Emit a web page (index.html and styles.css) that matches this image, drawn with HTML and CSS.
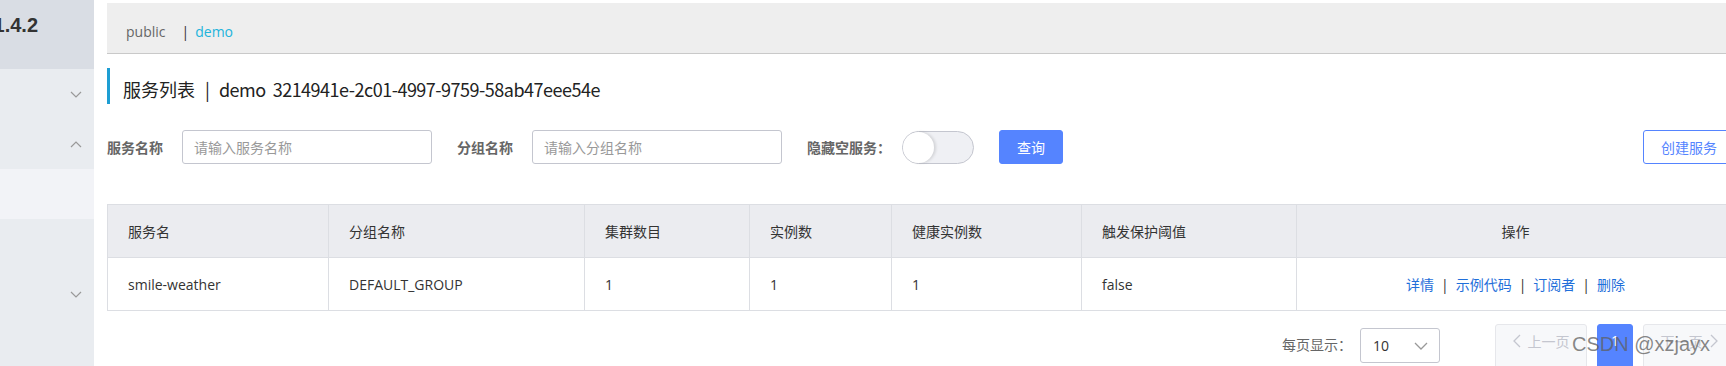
FILE: index.html
```html
<!DOCTYPE html>
<html lang="zh-CN">
<head>
<meta charset="utf-8">
<title>服务列表</title>
<link rel="stylesheet" href="styles.css">
</head>
<body>
<div class="app">
  <aside class="sidebar">
    <div class="brand">1.4.2</div>
    <nav class="menu">
      <div class="menu-item"><svg class="chev" viewBox="0 0 12 7" width="12" height="7"><polyline points="1,1 6,6 11,1"/></svg></div>
      <div class="menu-item"><svg class="chev" viewBox="0 0 12 7" width="12" height="7"><polyline points="1,6 6,1 11,6"/></svg></div>
      <div class="menu-item active"></div>
      <div class="menu-item"></div>
      <div class="menu-item"><svg class="chev" viewBox="0 0 12 7" width="12" height="7"><polyline points="1,1 6,6 11,1"/></svg></div>
    </nav>
  </aside>
  <main class="main">
    <div class="crumb"><span class="ns">public</span><span class="sep">|</span><span class="ns current">demo</span></div>
    <h1 class="page-title">服务列表<span class="t-sep">|</span><span class="t-id">demo&nbsp;&nbsp;3214941e-2c01-4997-9759-58ab47eee54e</span></h1>
    <div class="filters">
      <label class="field"><span class="field-label">服务名称</span><input class="input" placeholder="请输入服务名称"></label>
      <label class="field"><span class="field-label">分组名称</span><input class="input" placeholder="请输入分组名称"></label>
      <div class="field"><span class="field-label switch-label">隐藏空服务：</span><span class="switch"></span></div>
      <button class="btn btn-primary">查询</button>
      <button class="btn btn-outline">创建服务</button>
    </div>
    <table class="grid">
      <colgroup>
        <col class="c1"><col class="c2"><col class="c3"><col class="c4"><col class="c5"><col class="c6"><col>
      </colgroup>
      <thead>
        <tr><th>服务名</th><th>分组名称</th><th>集群数目</th><th>实例数</th><th>健康实例数</th><th>触发保护阈值</th><th class="center">操作</th></tr>
      </thead>
      <tbody>
        <tr>
          <td>smile-weather</td><td>DEFAULT_GROUP</td><td>1</td><td>1</td><td>1</td><td>false</td>
          <td class="center"><a class="link">详情</a><span class="bar">|</span><a class="link">示例代码</a><span class="bar">|</span><a class="link">订阅者</a><span class="bar">|</span><a class="link">删除</a></td>
        </tr>
      </tbody>
    </table>
    <div class="pager">
      <span class="pager-label">每页显示：</span>
      <div class="select"><span>10</span><svg class="sel-chev" viewBox="0 0 14 8" width="14" height="8"><polyline points="1,1 7,7 13,1"/></svg></div>
      <button class="pg pg-prev"><svg viewBox="0 0 8 14" width="8" height="14"><polyline points="7,1 1,7 7,13"/></svg>上一页</button>
      <button class="pg pg-cur">1</button>
      <button class="pg pg-next">下一页<svg viewBox="0 0 8 14" width="8" height="14"><polyline points="1,1 7,7 1,13"/></svg></button>
    </div>
  </main>
  <div class="watermark">CSDN @xzjayx</div>
</div>
</body>
</html>
```
FILE: styles.css
```css
html, body {
  margin: 0;
  padding: 0;
  overflow: hidden;
  background: #fff;
}
body {
  font-family: "Open Sans", "Noto Sans CJK SC", sans-serif;
  color: #333;
  font-size: 14px;
}
.app {
  display: flex;
  width: 1746px;
  height: 366px;
  position: relative;
}
.sidebar {
  flex: none;
  width: 94px;
  background: #e9ecf0;
}
.brand {
  height: 69px;
  box-sizing: border-box;
  background: #d9dde4;
  display: flex;
  justify-content: flex-end;
  padding: 13px 56px 0 0;
  font-family: "Liberation Sans", sans-serif;
  font-size: 20px;
  line-height: 24px;
  font-weight: bold;
  color: #333;
}
.menu-item {
  height: 50px;
  display: flex;
  align-items: center;
  justify-content: flex-end;
  padding-right: 12px;
}
.menu-item.active {
  background: #f2f3f7;
}
.chev {
  fill: none;
  stroke: #999;
  stroke-width: 1.2;
}
.main {
  flex: none;
  width: 1628px;
  margin-left: 13px;
  padding-top: 3px;
}
.crumb {
  height: 51px;
  box-sizing: border-box;
  background: #eeeeee;
  border-bottom: 1px solid #c9c9c9;
  display: flex;
  align-items: center;
  padding: 7px 0 0 19px;
  font-size: 14px;
}
.ns { color: #666; }
.ns.current { color: #22b4dc; }
.sep { color: #333; margin: 0 6px 0 16px; }
.page-title {
  margin: 14px 0 0;
  height: 36px;
  box-sizing: border-box;
  border-left: 3px solid #1e9ed3;
  padding: 9px 0 0 13px;
  font-size: 18px;
  line-height: 24px;
  font-weight: normal;
  color: #222;
  font-family: "Noto Sans CJK SC", "Liberation Sans", sans-serif;
  white-space: nowrap;
}
.t-sep { margin: 0 9px 0 10px; }
.t-id { letter-spacing: -0.5px; }
.filters {
  margin-top: 26px;
  height: 34px;
  display: flex;
  align-items: center;
}
.field {
  display: flex;
  align-items: center;
}
.field + .field { margin-left: 25px; }
.field-label {
  font-weight: bold;
  color: #666;
  margin-right: 19px;
  white-space: nowrap;
}
.switch-label { margin-right: 11px; }
.input {
  width: 250px;
  height: 34px;
  box-sizing: border-box;
  border: 1px solid #c4c6cf;
  border-radius: 3px;
  padding: 0 11px;
  font: inherit;
  color: #333;
  outline: none;
}
.input::placeholder { color: #999; }
.switch {
  position: relative;
  width: 72px;
  height: 33px;
  box-sizing: border-box;
  border: 1px solid #c4c6cf;
  border-radius: 17px;
  background: #eff0f4;
}
.switch::after {
  content: "";
  position: absolute;
  left: 0;
  top: 0;
  width: 31px;
  height: 31px;
  border-radius: 50%;
  background: #fff;
  box-shadow: 2px 0 3px rgba(0, 0, 0, 0.12);
}
.btn {
  height: 34px;
  box-sizing: border-box;
  border-radius: 3px;
  font: inherit;
  padding: 0 17px;
  cursor: pointer;
}
.btn-primary {
  margin-left: 25px;
  background: #5584ff;
  border: 1px solid #5584ff;
  color: #fff;
}
.btn-outline {
  margin-left: auto;
  background: #fff;
  border: 1px solid #5584ff;
  color: #5584ff;
  padding: 0 17px;
}
.grid {
  margin-top: 40px;
  width: 100%;
  border-collapse: collapse;
  table-layout: fixed;
  border: 1px solid #dcdee3;
}
.c1 { width: 221px; }
.c2 { width: 256px; }
.c3 { width: 165px; }
.c4 { width: 142px; }
.c5 { width: 190px; }
.c6 { width: 215px; }
.grid th, .grid td {
  border: 1px solid #dcdee3;
  padding: 0 20px;
  text-align: left;
  font-weight: normal;
  color: #333;
  white-space: nowrap;
}
.grid th {
  background: #ebecf0;
  height: 52px;
}
.grid td {
  height: 52px;
}
.grid .center { text-align: center; }
.link { color: #1f6fda; cursor: pointer; }
.bar { color: #333; margin: 0 7px; }
.pager {
  margin-top: 13px;
  display: flex;
  justify-content: flex-end;
  align-items: flex-start;
}
.pager-label {
  color: #666;
  margin-top: 12px;
  line-height: 18px;
}
.select {
  margin-left: 8px;
  margin-top: 4px;
  width: 80px;
  height: 35px;
  box-sizing: border-box;
  border: 1px solid #c4c6cf;
  border-radius: 3px;
  display: flex;
  align-items: center;
  justify-content: space-between;
  padding: 0 11px 0 12px;
  color: #333;
}
.sel-chev { fill: none; stroke: #999; stroke-width: 1.3; }
.pg {
  height: 46px;
  box-sizing: border-box;
  border-radius: 3px;
  font: inherit;
  padding: 0 0 13px;
  display: flex;
  align-items: center;
  justify-content: center;
  gap: 7px;
}
.pg svg { fill: none; stroke: #c4c6cf; stroke-width: 1.3; }
.pg-prev, .pg-next {
  width: 92px;
  background: #f7f8fa;
  border: 1px solid #e6e7eb;
  color: #c4c6cf;
}
.pg-prev { margin-left: 55px; }
.pg-cur {
  margin-left: 10px;
  width: 36px;
  background: #5584ff;
  border: 1px solid #5584ff;
  color: #fff;
}
.pg-next { margin-left: 10px; }
.watermark {
  position: absolute;
  left: 1572px;
  top: 331px;
  font-family: "Liberation Sans", sans-serif;
  font-size: 20px;
  line-height: 26px;
  color: rgba(95, 95, 95, 0.75);
  white-space: nowrap;
}
```
